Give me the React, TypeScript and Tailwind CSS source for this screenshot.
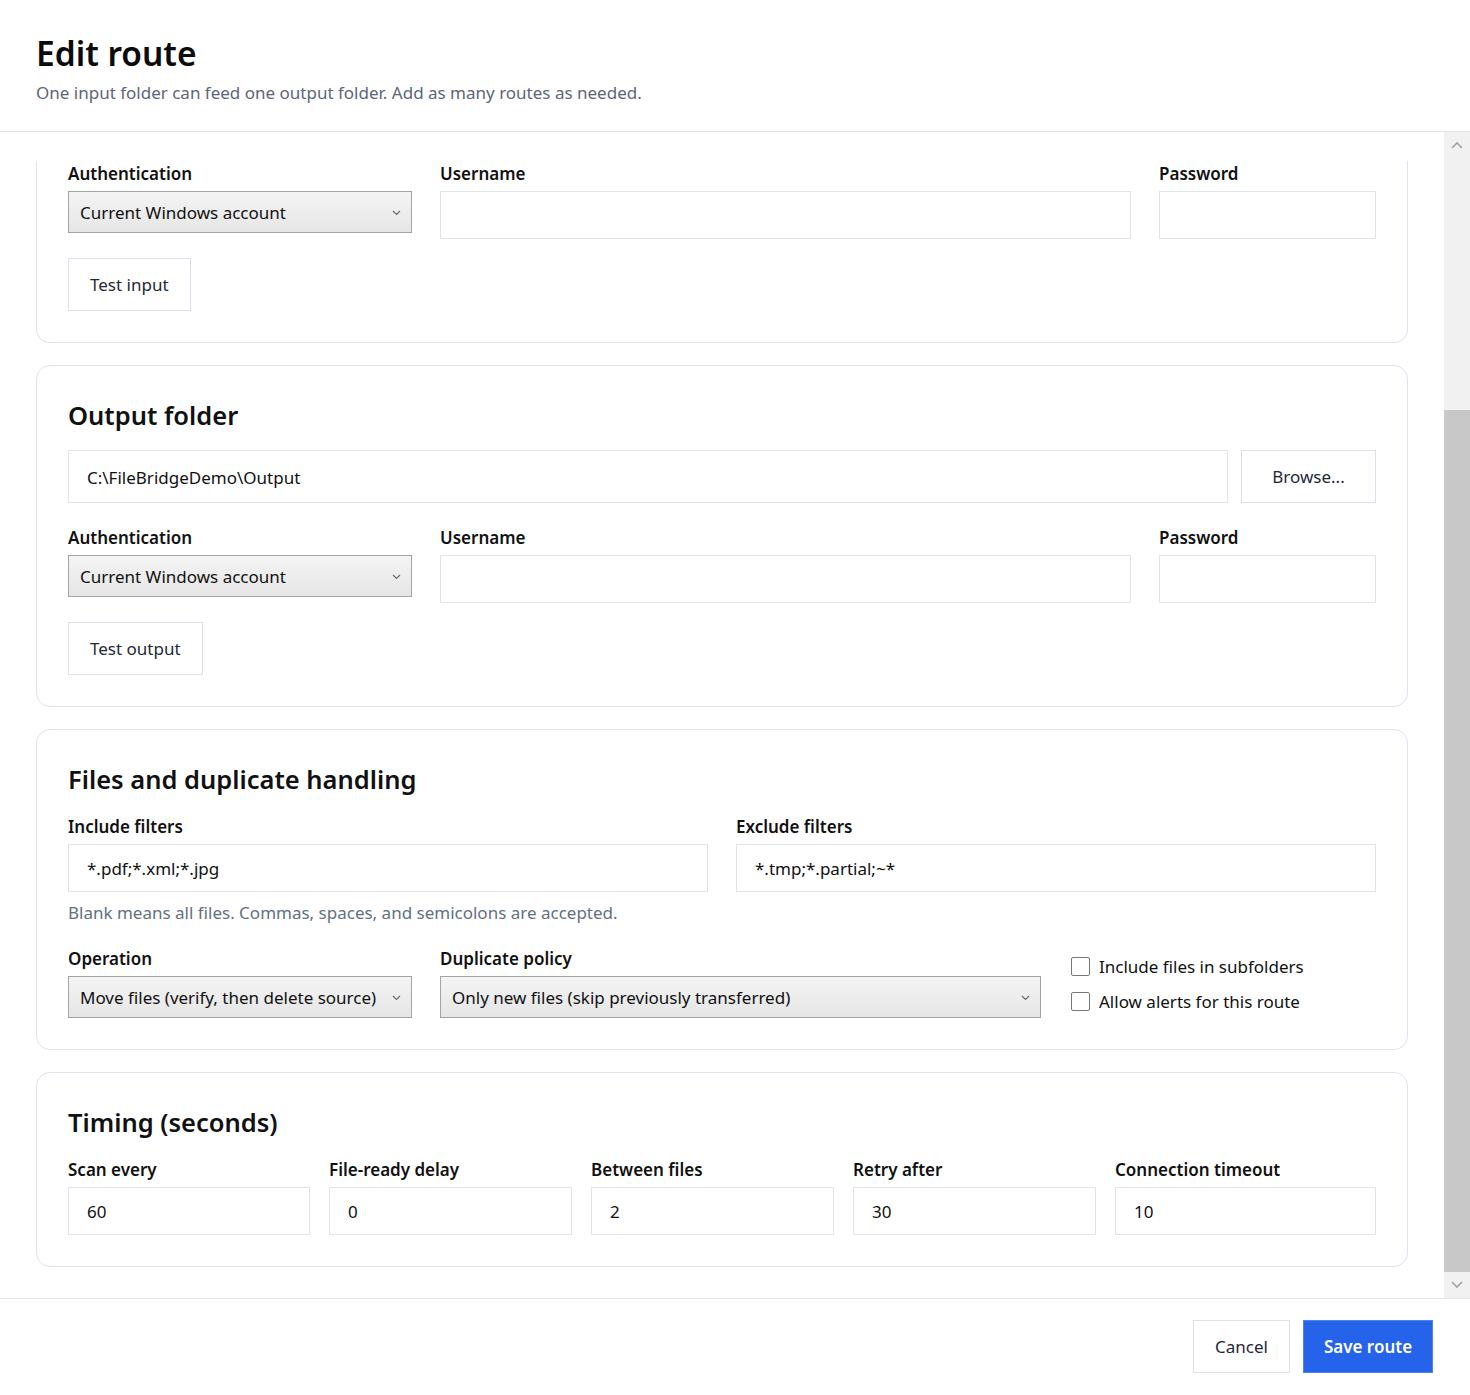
import React from "react";

function Label({ children }: { children: React.ReactNode }) {
  return (
    <div className="h-[22px] leading-[26px] mb-2 text-[17px] font-semibold text-[#111]">
      {children}
    </div>
  );
}

function TextBox({ value = "", className = "" }: { value?: string; className?: string }) {
  return (
    <input
      readOnly
      value={value}
      className={`h-[48px] w-full border border-[#dfe5ee] bg-white px-[18px] pt-px text-[17px] text-[#111] outline-none ${className}`}
    />
  );
}

function Chevron() {
  return (
    <svg width="9" height="6" viewBox="0 0 9 6" fill="none">
      <path d="M1 1l3.5 3.5L8 1" stroke="#6b6b6b" strokeWidth="1.2" />
    </svg>
  );
}

function Select({ value }: { value: string }) {
  return (
    <button className="flex h-[42px] w-full items-center justify-between border border-[#a3a3a3] bg-linear-to-b from-[#f4f4f4] to-[#e6e6e6] pt-px pl-[11px] pr-[10px] text-left text-[17px] text-[#111]">
      <span>{value}</span>
      <Chevron />
    </button>
  );
}

function Btn({ children, className = "" }: { children: React.ReactNode; className?: string }) {
  return (
    <button
      className={`h-[53px] border border-[#dbe2ee] bg-white px-[21px] text-[17px] text-[#1f2937] ${className}`}
    >
      {children}
    </button>
  );
}

function Check({ label }: { label: string }) {
  return (
    <div className="flex h-[22px] items-center gap-[9px] text-[17px] text-[#111]">
      <span className="h-[19px] w-[19px] rounded-[2px] border border-[#777] bg-white" />
      <span className="pt-px">{label}</span>
    </div>
  );
}

function AuthRow() {
  return (
    <div className="grid grid-cols-[344px_1fr_217px] gap-x-[28px]">
      <div>
        <Label>Authentication</Label>
        <Select value="Current Windows account" />
      </div>
      <div>
        <Label>Username</Label>
        <TextBox />
      </div>
      <div>
        <Label>Password</Label>
        <TextBox />
      </div>
    </div>
  );
}

function Card({ title, children }: { title: string; children: React.ReactNode }) {
  return (
    <section className="rounded-[14px] border border-[#dde4ef] bg-white px-[31px] pt-[31px] pb-[31px]">
      <h2 className="mb-[17px] h-[36px] text-[25.5px] leading-[37px] font-semibold text-[#111]">{title}</h2>
      {children}
    </section>
  );
}

export default function App() {
  const timing = [
    ["Scan every", "60"],
    ["File-ready delay", "0"],
    ["Between files", "2"],
    ["Retry after", "30"],
    ["Connection timeout", "10"],
  ];

  return (
    <div className="flex h-[1395px] flex-col overflow-hidden bg-white font-['Noto_Sans',sans-serif]">
      {/* header */}
      <header className="border-b border-[#e2e6ee] px-9 pt-[30px] pb-[27px]">
        <h1 className="text-[33.5px] leading-[46px] font-semibold text-[#0b0b0b]">Edit route</h1>
        <p className="mt-1 text-[17px] leading-[26px] h-[24px] text-[#5d6676]">
          One input folder can feed one output folder. Add as many routes as needed.
        </p>
      </header>

      <div className="flex min-h-0 flex-1">
        <main className="flex min-w-0 flex-1 flex-col gap-[22px] overflow-hidden px-9 pt-[29px]">
          {/* input folder card, scrolled partly out of view */}
          <section className="shrink-0 rounded-b-[14px] border-x border-b border-[#dde4ef] bg-white px-[31px] pb-[31px]">
            <AuthRow />
            <Btn className="mt-[19px]">Test input</Btn>
          </section>

          <Card title="Output folder">
            <div className="flex gap-[13px]">
              <TextBox value="C:\FileBridgeDemo\Output" className="h-[53px] flex-1" />
              <Btn className="w-[135px] shrink-0">Browse...</Btn>
            </div>
            <div className="mt-[22px]">
              <AuthRow />
            </div>
            <Btn className="mt-[19px]">Test output</Btn>
          </Card>

          <Card title="Files and duplicate handling">
            <div className="mt-px grid grid-cols-2 gap-x-[28px]">
              <div>
                <Label>Include filters</Label>
                <TextBox value="*.pdf;*.xml;*.jpg" />
              </div>
              <div>
                <Label>Exclude filters</Label>
                <TextBox value="*.tmp;*.partial;~*" />
              </div>
            </div>
            <p className="mt-[10px] text-[17px] leading-[22px] text-[#64707f]">
              Blank means all files. Commas, spaces, and semicolons are accepted.
            </p>
            <div className="mt-[22px] grid grid-cols-[344px_601px_1fr] gap-x-[28px]">
              <div>
                <Label>Operation</Label>
                <Select value="Move files (verify, then delete source)" />
              </div>
              <div>
                <Label>Duplicate policy</Label>
                <Select value="Only new files (skip previously transferred)" />
              </div>
              <div className="flex flex-col gap-[13px] pt-[9px] pl-[2px]">
                <Check label="Include files in subfolders" />
                <Check label="Allow alerts for this route" />
              </div>
            </div>
          </Card>

          <Card title="Timing (seconds)">
            <div className="mt-px grid grid-cols-[242px_243px_243px_243px_1fr] gap-x-[19px]">
              {timing.map(([l, v]) => (
                <div key={l}>
                  <Label>{l}</Label>
                  <TextBox value={v} />
                </div>
              ))}
            </div>
          </Card>
        </main>

        {/* scrollbar */}
        <div className="flex w-[26px] shrink-0 flex-col bg-[#f1f1f1]">
          <div className="flex h-[26px] items-center justify-center">
            <svg width="12" height="8" viewBox="0 0 12 8" fill="none">
              <path d="M1 7l5-5 5 5" stroke="#a3a3a3" strokeWidth="1.6" />
            </svg>
          </div>
          <div className="flex flex-1 flex-col">
            <div className="h-[252px]" />
            <div className="flex-1 bg-[#c8c8c8]" />
          </div>
          <div className="flex h-[26px] items-center justify-center">
            <svg width="12" height="8" viewBox="0 0 12 8" fill="none">
              <path d="M1 1l5 5 5-5" stroke="#a3a3a3" strokeWidth="1.6" />
            </svg>
          </div>
        </div>
      </div>

      {/* footer */}
      <footer className="flex justify-end gap-[13px] border-t border-[#e2e6ee] pt-[21px] pr-[37px] pb-[22px]">
        <Btn className="w-[97px] px-0">Cancel</Btn>
        <button className="h-[53px] w-[130px] border border-[#4d82f0] bg-[#2563eb] text-[17px] font-semibold text-white">
          Save route
        </button>
      </footer>
    </div>
  );
}
